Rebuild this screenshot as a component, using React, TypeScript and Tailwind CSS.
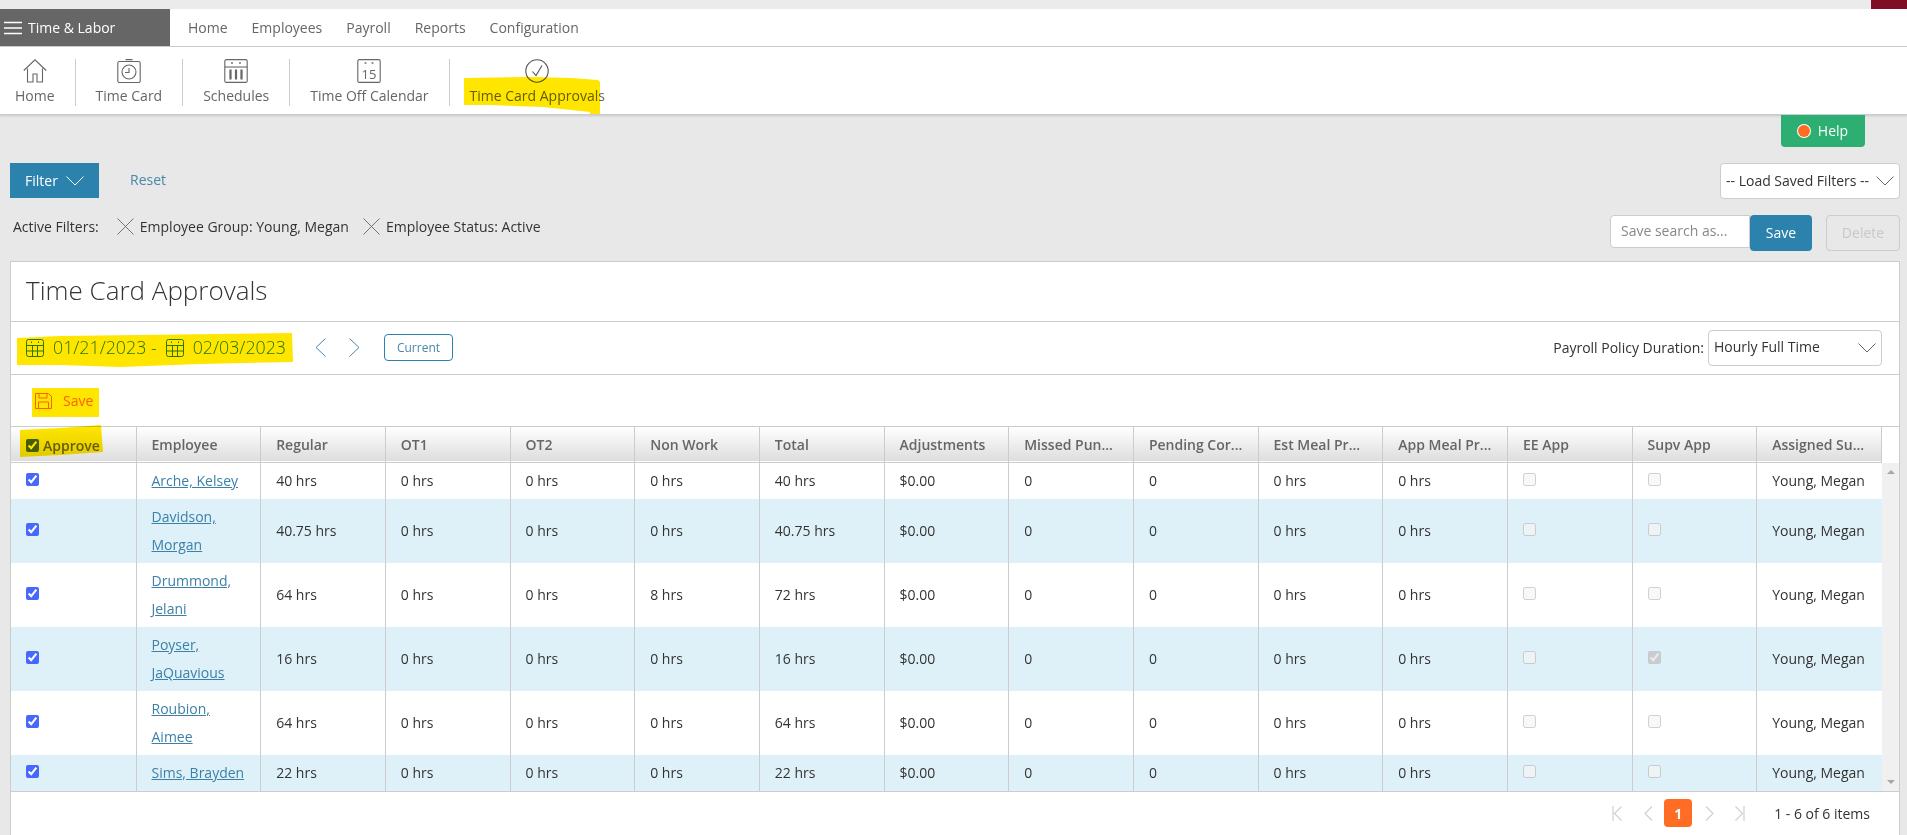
import { type ReactNode } from "react";

const rows = [
  { name: ["Arche, Kelsey"], regular: "40 hrs", nonWork: "0 hrs", total: "40 hrs" },
  { name: ["Davidson,", "Morgan"], regular: "40.75 hrs", nonWork: "0 hrs", total: "40.75 hrs" },
  { name: ["Drummond,", "Jelani"], regular: "64 hrs", nonWork: "8 hrs", total: "72 hrs" },
  { name: ["Poyser,", "JaQuavious"], regular: "16 hrs", nonWork: "0 hrs", total: "16 hrs", supv: true },
  { name: ["Roubion,", "Aimee"], regular: "64 hrs", nonWork: "0 hrs", total: "64 hrs" },
  { name: ["Sims, Brayden"], regular: "22 hrs", nonWork: "0 hrs", total: "22 hrs" },
];

const headers = [
  "Employee",
  "Regular",
  "OT1",
  "OT2",
  "Non Work",
  "Total",
  "Adjustments",
  "Missed Pun...",
  "Pending Cor...",
  "Est Meal Pr...",
  "App Meal Pr...",
  "EE App",
  "Supv App",
  "Assigned Su...",
];

function CalendarIcon() {
  return (
    <svg width="18" height="18" viewBox="0 0 18 18" fill="none" stroke="#2b82ad" strokeWidth="1">
      <rect x="0.5" y="0.5" width="17" height="17" rx="2" />
      <path d="M0.5 6.5h17M0.5 12h17M6.5 6.5v11M11.5 6.5v11M5.5 2.5v1.5M12.5 2.5v1.5" />
    </svg>
  );
}

function DownArrow({ stroke }: { stroke: string }) {
  return (
    <svg width="18" height="10" viewBox="0 0 18 10" fill="none" stroke={stroke} strokeWidth="1">
      <path d="M0.5 0.5 9 9l8.5-8.5" />
    </svg>
  );
}

function Cross() {
  return (
    <svg width="17" height="17" viewBox="0 0 17 17" fill="none" stroke="#666666" strokeWidth="0.9">
      <path d="M0.5 0.5l16 16M16.5 0.5l-16 16" />
    </svg>
  );
}

function ToolItem({ label, icon, first, last }: { label: string; icon: ReactNode; first?: boolean; last?: boolean }) {
  return (
    <div
      className={`flex h-[47px] flex-col items-center justify-between ${first ? "pl-[15px] pr-[20px]" : "px-[20px]"} ${last ? "" : "border-r border-[#cccccc]"}`}
    >
      <div className="flex h-[26px] items-start">{icon}</div>
      <span className="leading-5 text-[#666666]">{label}</span>
    </div>
  );
}

function PillSelect({ label, className }: { label: string; className: string }) {
  return (
    <div className={`flex items-center justify-between whitespace-nowrap rounded-sm border border-[#cccccc] bg-white pl-[5px] pr-[5px] text-[#333333] ${className}`}>
      <span className="pb-[2px]">{label}</span>
      <DownArrow stroke="#666666" />
    </div>
  );
}

export default function App() {
  return (
    <div className="relative h-screen overflow-hidden bg-[#e8e8e8] font-['Open_Sans',sans-serif] text-[14px] text-[#333333]">
      <div className="flex h-[9px] justify-end bg-[#ebebeb]">
        <div className="w-[36px] bg-[#7f0d25]" />
      </div>

      <div className="flex h-[38px] border-b border-[#cccccc] bg-white">
        <div className="flex w-[170px] items-center gap-[6px] bg-[#666666] pl-[4px] text-white">
          <svg width="18" height="14" viewBox="0 0 18 14" stroke="white" strokeWidth="1.4">
            <path d="M0 1.5h18M0 7h18M0 12.5h18" />
          </svg>
          <span>Time &amp; Labor</span>
        </div>
        <nav className="ml-[18px] flex items-center gap-[24px] text-[#666666]">
          <span>Home</span>
          <span>Employees</span>
          <span>Payroll</span>
          <span>Reports</span>
          <span>Configuration</span>
        </nav>
      </div>

      <div className="flex h-[68px] items-start border-b border-[#cccccc] bg-white pt-3 shadow-[0_1px_2px_rgba(0,0,0,0.15)]">
        <ToolItem
          first
          label="Home"
          icon={
            <svg width="24" height="24" viewBox="0 0 24 24" fill="none" stroke="#666666" strokeWidth="1.1">
              <path d="M0.8 11.5 12 0.8l11.2 10.7M4.5 9.5V23h5.5v-8h4v8h5.5V9.5" />
            </svg>
          }
        />
        <ToolItem
          label="Time Card"
          icon={
            <svg width="24" height="24" viewBox="0 0 24 24" fill="none" stroke="#666666" strokeWidth="1.1">
              <rect x="0.8" y="2.5" width="22.4" height="21" rx="1.5" />
              <circle cx="12" cy="13" r="7" />
              <path d="M12 9v4.5H8M8.5 0.6h7" />
            </svg>
          }
        />
        <ToolItem
          label="Schedules"
          icon={
            <svg width="24" height="24" viewBox="0 0 24 24" fill="none" stroke="#666666" strokeWidth="1.1">
              <rect x="0.8" y="0.6" width="22.4" height="22.8" rx="1.5" />
              <path d="M0.8 8h22.4" />
              <path d="M8 3.2v1.6M16 3.2v1.6" strokeWidth="1.8" />
              <path d="M6.5 10.5v10M12 10.5v10M17.5 10.5v10" strokeWidth="2.2" />
            </svg>
          }
        />
        <ToolItem
          label="Time Off Calendar"
          icon={
            <svg width="24" height="24" viewBox="0 0 24 24" fill="none" stroke="#666666" strokeWidth="1.1">
              <rect x="0.8" y="0.6" width="22.4" height="22.8" rx="1.5" />
              <path d="M8.5 3.2v1.6M15.5 3.2v1.6" strokeWidth="1.8" />
              <text x="12" y="19.5" fontSize="13" textAnchor="middle" fill="#666666" stroke="none">
                15
              </text>
            </svg>
          }
        />
        <ToolItem
          last
          label="Time Card Approvals"
          icon={
            <svg width="24" height="24" viewBox="0 0 24 24" fill="none" stroke="#555555" strokeWidth="1.1">
              <circle cx="12" cy="12" r="11.2" />
              <path d="M7.5 12.5l3.5 4 6-10" />
            </svg>
          }
        />
      </div>

      <div className="flex justify-end pr-[42px]">
        <div className="flex h-[32px] w-[84px] items-center justify-center gap-[8px] rounded-b-sm bg-[#2daf74] text-[#f7fff7]">
          <span className="h-[12px] w-[12px] rounded-full bg-[#ff6c24] ring-1 ring-white" />
          <span className="pb-[2px]">Help</span>
        </div>
      </div>

      <div className="mt-4 flex items-start justify-between pl-[10px] pr-[7px]">
        <div className="flex items-center">
          <div className="flex h-[35px] w-[89px] items-center justify-center gap-[8px] bg-[#2b82ad] text-white">
            <span>Filter</span>
            <DownArrow stroke="white" />
          </div>
          <span className="ml-[31px] pb-[2px] text-[#4a86a8]">Reset</span>
        </div>
        <PillSelect label="-- Load Saved Filters --" className="h-[36px] w-[180px]" />
      </div>

      <div className="mt-4 flex h-[36px] items-start justify-between pl-[13px] pr-[7px]">
        <div className="flex h-[22px] items-center">
          <span>Active Filters:</span>
          <span className="ml-[18px]">
            <Cross />
          </span>
          <span className="ml-[6px]">Employee Group: Young, Megan</span>
          <span className="ml-[14px]">
            <Cross />
          </span>
          <span className="ml-[6px]">Employee Status: Active</span>
        </div>
        <div className="flex">
          <div className="flex h-[33px] w-[140px] items-center rounded-l-sm border border-[#cccccc] bg-white pb-[2px] pl-[10px] text-[#888888]">
            Save search as...
          </div>
          <div className="flex h-[36px] w-[62px] items-center justify-center rounded-sm bg-[#2b82ad] pb-[2px] text-white">Save</div>
          <div className="ml-[14px] flex h-[36px] w-[74px] items-center justify-center rounded-sm border border-[#cccccc] pb-[2px] text-[#c8c8c8]">
            Delete
          </div>
        </div>
      </div>

      <div className="ml-[10px] mr-[7px] mt-[10px] border border-[#cccccc] bg-white">
        <div className="flex h-[60px] items-center border-b border-[#cccccc] pb-0.5 pl-[15px] text-[26px] font-light text-[#333333]">
          Time Card Approvals
        </div>

        <div className="flex h-[53px] items-center justify-between border-b border-[#cccccc] pb-px pl-[15px] pr-[17px]">
          <div className="flex items-center text-[#2b82ad]">
            <CalendarIcon />
            <span className="ml-[9px] text-[17.8px] font-light">01/21/2023 -</span>
            <span className="ml-[9px]">
              <CalendarIcon />
            </span>
            <span className="ml-[9px] text-[17.8px] font-light">02/03/2023</span>
            <svg width="11" height="19" viewBox="0 0 11 19" fill="none" stroke="#4a86a8" strokeWidth="1" className="ml-[29px]">
              <path d="M10.5 0.5 1 9.5l9.5 9" />
            </svg>
            <svg width="11" height="19" viewBox="0 0 11 19" fill="none" stroke="#4a86a8" strokeWidth="1" className="ml-[23px]">
              <path d="M0.5 0.5 10 9.5l-9.5 9" />
            </svg>
            <div className="ml-[24px] flex h-[27px] w-[69px] items-center justify-center rounded-sm border border-[#2b82ad] text-[12px] text-[#4a86a8]">
              Current
            </div>
          </div>
          <div className="flex items-center gap-[4px]">
            <span>Payroll Policy Duration:</span>
            <PillSelect label="Hourly Full Time" className="h-[36px] w-[174px]" />
          </div>
        </div>

        <div className="flex h-[52px] items-center gap-[11px] border-b border-[#cccccc] pl-[24px] text-[#ff6a1f]">
          <svg width="17" height="16" viewBox="0 0 17 16" fill="none" stroke="#ff6a1f" strokeWidth="1">
            <path d="M0.5 0.5h13l3 3v12h-16zM4 0.5v4.5h8V0.5M3.5 15.5V9h10v6.5" />
          </svg>
          <span>Save</span>
        </div>

        <div className="flex">
          <table className="w-[1871px] table-fixed border-collapse">
            <thead>
              <tr className="h-[35px] border-b border-[#cccccc] bg-gradient-to-b from-white to-[#dddddd]">
                <th className="w-[125px] border-r border-[#cccccc] pl-[15px] text-left font-semibold text-[#666666]">
                  <input type="checkbox" defaultChecked className="mr-[4px] align-middle accent-[#4768fd]" />
                  <span className="align-middle">Approve</span>
                </th>
                {headers.map((h) => (
                  <th key={h} className="truncate border-r border-[#cccccc] pl-[15px] text-left font-semibold text-[#666666]">
                    {h}
                  </th>
                ))}
              </tr>
            </thead>
            <tbody>
              {rows.map((r, i) => (
                <tr key={r.name[0]} className={i % 2 ? "bg-[#dff1f8]" : "bg-white"}>
                  <td className="border-r border-[#cccccc] py-1 pl-[15px] leading-7">
                    <input type="checkbox" defaultChecked className="mb-[5px] align-middle accent-[#4768fd]" />
                  </td>
                  <td className="border-r border-[#cccccc] py-1 pl-[15px] leading-7">
                    {r.name.map((n) => (
                      <div key={n}>
                        <a className="text-[#3c80a8] underline">{n}</a>
                      </div>
                    ))}
                  </td>
                  {[r.regular, "0 hrs", "0 hrs", r.nonWork, r.total, "$0.00", "0", "0", "0 hrs", "0 hrs"].map((v, j) => (
                    <td key={j} className="border-r border-[#cccccc] pl-[15px]">
                      {v}
                    </td>
                  ))}
                  <td className="border-r border-[#cccccc] pl-[15px]">
                    <input type="checkbox" disabled className="mb-[5px] align-middle" />
                  </td>
                  <td className="border-r border-[#cccccc] pl-[15px]">
                    <input type="checkbox" disabled defaultChecked={r.supv} className="mb-[5px] align-middle" />
                  </td>
                  <td className="pl-[15px]">Young, Megan</td>
                </tr>
              ))}
            </tbody>
          </table>
          <div className="flex w-[17px] flex-col">
            <div className="h-[36px] bg-white" />
            <div className="flex flex-1 flex-col items-center justify-between bg-[#f0f0f0] py-[7px]">
              <span className="h-0 w-0 border-x-[4px] border-b-[4px] border-x-transparent border-b-[#a6a6a6]" />
              <span className="h-0 w-0 border-x-[4px] border-t-[4px] border-x-transparent border-t-[#a6a6a6]" />
            </div>
          </div>
        </div>

        <div className="flex h-[44px] items-center justify-end border-t border-[#cccccc] pr-[29px]">
          <svg width="10" height="15" viewBox="0 0 10 15" fill="none" stroke="#d0d0d0" strokeWidth="1.2">
            <path d="M1 0v15M9.5 0.5 2.5 7.5l7 7" />
          </svg>
          <svg width="10" height="15" viewBox="0 0 10 15" fill="none" stroke="#d0d0d0" strokeWidth="1.2" className="ml-[21px]">
            <path d="M9 0.5 2 7.5l7 7" />
          </svg>
          <div className="ml-[11px] flex h-[28px] w-[28px] items-center justify-center rounded-sm bg-[#ff6c24] font-bold text-white">1</div>
          <svg width="9" height="15" viewBox="0 0 9 15" fill="none" stroke="#d0d0d0" strokeWidth="1.2" className="ml-[13px]">
            <path d="M1 0.5l7 7-7 7" />
          </svg>
          <svg width="10" height="15" viewBox="0 0 10 15" fill="none" stroke="#d0d0d0" strokeWidth="1.2" className="ml-[21px]">
            <path d="M9 0v15M0.5 0.5l7 7-7 7" />
          </svg>
          <span className="ml-[29px]">1 - 6 of 6 items</span>
        </div>
      </div>

      {/* marker scribbles over the screenshot */}
      <svg className="pointer-events-none absolute left-0 top-0 mix-blend-multiply" width="620" height="470" fill="#ffe600">
        <path d="M464 78 530 77 571 78 598 80 600 82V114H590V112L543 107 490 105 464 105Z" />
        <path d="M17 338 60 336 292 333 293 362 200 364 120 367 60 365 17 365Z" />
        <path d="M32 388H99V417H32Z" />
        <path d="M20 430 60 428 101 425 103 452 60 455 20 457Z" />
      </svg>
    </div>
  );
}
